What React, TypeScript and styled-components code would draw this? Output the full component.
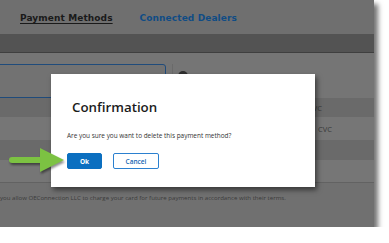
import React from "react";
import styled, { createGlobalStyle } from "styled-components";

const Global = createGlobalStyle`
  html, body { margin: 0; padding: 0; background: #ffffff; }
  body { font-family: "Open Sans", "Liberation Sans", sans-serif; }
`;

const Page = styled.div`
  position: relative;
  width: 374px;
  height: 227px;
  background: #737373;
  overflow: hidden;
  display: flex;
  flex-direction: column;
  box-shadow: 4px 4px 5px rgba(0, 0, 0, 0.55);
`;

const Tabs = styled.nav`
  height: 34px;
  box-sizing: border-box;
  display: flex;
  align-items: center;
  gap: 27px;
  padding: 2px 0 0 20px;
  background: #6f6f6f;
`;

const Tab = styled.span<{ $active?: boolean }>`
  font: bold 9px "DejaVu Sans", Verdana, sans-serif;
  letter-spacing: 0.1px;
  color: ${(p) => (p.$active ? "#1a1a1a" : "#0f4c85")};
  text-decoration: ${(p) => (p.$active ? "underline" : "none")};
  text-underline-offset: 2px;
`;

const Band = styled.div`
  height: 18px;
  background: #535353;
  border-bottom: 1px solid #3f3f3f;
`;

const Content = styled.section`
  flex: 1;
  display: flex;
  flex-direction: column;
  padding-top: 11px;
  background: #757575;
`;

const TopRow = styled.div`
  display: grid;
  grid-template-columns: 166px 1fr;
  column-gap: 6px;
  height: 34px;
`;

const InputBox = styled.div`
  margin-left: -6px;
  border: 1px solid #1f4b7b;
  border-radius: 3px;
  background: #727272;
`;

const Panel = styled.div`
  margin-right: 37px;
  border-left: 1px solid #6a6a6a;
  padding: 7px 0 0 5px;
`;

const Dot = styled.div`
  width: 10px;
  height: 10px;
  border-radius: 50%;
  background: #2e2e2e;
`;

const Row = styled.div<{ $dark?: boolean; $h: number }>`
  display: grid;
  grid-template-columns: 172px 1fr;
  align-items: center;
  height: ${(p) => p.$h}px;
  background: ${(p) => (p.$dark ? "#6a6a6a" : "#767676")};
`;

const Cell = styled.span<{ $indent: number }>`
  padding-left: ${(p) => p.$indent}px;
  font-size: 7.5px;
  color: #3a3a3a;
`;

const Footer = styled.footer`
  flex: 1;
  border-top: 1px solid #626262;
  background: #707070;
  padding-top: 10px;
  overflow: hidden;
`;

const Terms = styled.p`
  margin: 0;
  font-size: 6.1px;
  line-height: 9px;
  color: #3b3b3b;
  white-space: nowrap;
`;

const Modal = styled.div`
  position: absolute;
  left: 51px;
  top: 74px;
  width: 264px;
  height: 113px;
  box-sizing: border-box;
  padding: 24px 16px 0;
  background: #ffffff;
  box-shadow: 2px 3px 5px rgba(0, 0, 0, 0.5);
`;

const Title = styled.h2`
  margin: 0 0 0 5px;
  font: 600 13.3px/19px "Open Sans", sans-serif;
  color: #1b1b1b;
`;

const Message = styled.p`
  margin: 14px 0 0;
  font-size: 6.45px;
  line-height: 9px;
  color: #333333;
`;

const Actions = styled.div`
  display: flex;
  gap: 11px;
  margin-top: 13px;
`;

const Button = styled.button<{ $primary?: boolean; $w: number }>`
  width: ${(p) => p.$w}px;
  height: 16px;
  padding: 0;
  border-radius: 2px;
  border: 1px solid ${(p) => (p.$primary ? "#0b6fc0" : "#2b80cf")};
  background: ${(p) => (p.$primary ? "#0b6fc0" : "#ffffff")};
  color: ${(p) => (p.$primary ? "#ffffff" : "#1666b3")};
  font: ${(p) => (p.$primary ? 700 : 600)} 6.5px "Open Sans", sans-serif;
`;

const Arrow = styled.svg`
  position: absolute;
  left: 6px;
  top: 144px;
  filter: drop-shadow(1px 2px 1px rgba(0, 0, 0, 0.45));
`;

export default function App() {
  return (
    <>
      <Global />
      <Page>
        <Tabs>
          <Tab $active>Payment Methods</Tab>
          <Tab>Connected Dealers</Tab>
        </Tabs>
        <Band />
        <Content>
          <TopRow>
            <InputBox />
            <Panel>
              <Dot />
            </Panel>
          </TopRow>
          <Row $dark $h={19}>
            <span />
            <Cell $indent={136}>CVC</Cell>
          </Row>
          <Row $h={23}>
            <span />
            <Cell $indent={146}>CVC</Cell>
          </Row>
          <Row $dark $h={20} />
          <Row $h={22} />
          <Footer>
            <Terms>
              you allow OEConnection LLC to charge your card for future payments in accordance with their terms.
            </Terms>
          </Footer>
        </Content>
        <Modal role="dialog">
          <Title>Confirmation</Title>
          <Message>Are you sure you want to delete this payment method?</Message>
          <Actions>
            <Button $primary $w={35}>Ok</Button>
            <Button $w={46}>Cancel</Button>
          </Actions>
        </Modal>
        <Arrow width="64" height="32" viewBox="0 0 64 32">
          <rect x="3" y="13" width="34" height="6" rx="3" fill="#7cc242" />
          <polygon points="34,4 58,16 34,28" fill="#7cc242" />
        </Arrow>
      </Page>
    </>
  );
}
